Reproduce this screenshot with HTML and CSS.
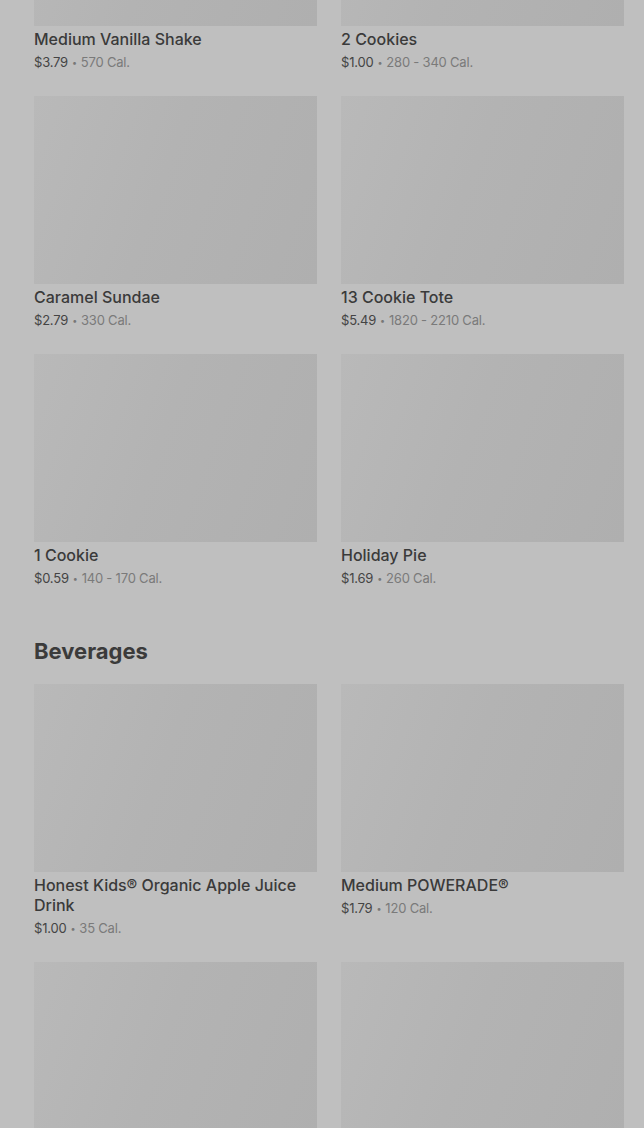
FILE: index.html
```html
<!DOCTYPE html>
<html lang="en">
<head>
    <meta charset="UTF-8">
    <meta name="viewport" content="width=device-width, initial-scale=1.0">
    <title>Menu</title>
    <link rel="stylesheet" href="styles.css">
</head>
<body>
    <div class="menu">
        <section class="section first">
            <div class="grid">
                <div class="card">
                    <div class="thumb"></div>
                    <div class="name">Medium Vanilla Shake</div>
                    <div class="meta"><span class="price">$3.79</span><span class="dot">•</span><span class="cal">570 Cal.</span></div>
                </div>
                <div class="card">
                    <div class="thumb"></div>
                    <div class="name">2 Cookies</div>
                    <div class="meta"><span class="price">$1.00</span><span class="dot">•</span><span class="cal">280 - 340 Cal.</span></div>
                </div>
                <div class="card">
                    <div class="thumb"></div>
                    <div class="name">Caramel Sundae</div>
                    <div class="meta"><span class="price">$2.79</span><span class="dot">•</span><span class="cal">330 Cal.</span></div>
                </div>
                <div class="card">
                    <div class="thumb"></div>
                    <div class="name">13 Cookie Tote</div>
                    <div class="meta"><span class="price">$5.49</span><span class="dot">•</span><span class="cal">1820 - 2210 Cal.</span></div>
                </div>
                <div class="card">
                    <div class="thumb"></div>
                    <div class="name">1 Cookie</div>
                    <div class="meta"><span class="price">$0.59</span><span class="dot">•</span><span class="cal">140 - 170 Cal.</span></div>
                </div>
                <div class="card">
                    <div class="thumb"></div>
                    <div class="name">Holiday Pie</div>
                    <div class="meta"><span class="price">$1.69</span><span class="dot">•</span><span class="cal">260 Cal.</span></div>
                </div>
            </div>
        </section>

        <section class="section">
            <h2>Beverages</h2>
            <div class="grid">
                <div class="card">
                    <div class="thumb"></div>
                    <div class="name">Honest Kids® Organic Apple Juice Drink</div>
                    <div class="meta"><span class="price">$1.00</span><span class="dot">•</span><span class="cal">35 Cal.</span></div>
                </div>
                <div class="card">
                    <div class="thumb"></div>
                    <div class="name">Medium POWERADE®</div>
                    <div class="meta"><span class="price">$1.79</span><span class="dot">•</span><span class="cal">120 Cal.</span></div>
                </div>
                <div class="card">
                    <div class="thumb"></div>
                </div>
                <div class="card">
                    <div class="thumb"></div>
                </div>
            </div>
        </section>
    </div>
</body>
</html>
```

FILE: styles.css
```css
* {
    margin: 0;
    padding: 0;
    box-sizing: border-box;
}

body {
    background: #bfbfbf;
    font-family: Inter, 'Liberation Sans', sans-serif;
    color: #3a3a3a;
    overflow: hidden;
    height: 1128px;
}

.menu {
    padding: 0 20px 0 34px;
    margin-top: -162px;
}

.section h2 {
    font-size: 22px;
    line-height: 28px;
    font-weight: 700;
    color: #3b3b3b;
    margin: 49px 0 19px;
}

.grid {
    display: grid;
    grid-template-columns: 1fr 1fr;
    column-gap: 24px;
    row-gap: 24px;
}

.thumb {
    height: 188px;
    background: linear-gradient(110deg, #b9b9b9 0%, #b3b3b3 45%, #afafaf 100%);
}

.name {
    margin-top: 3px;
    font-size: 16px;
    line-height: 20px;
    font-weight: 500;
    color: #3a3a3a;
}

.meta {
    margin-top: 3px;
    font-size: 13px;
    line-height: 20px;
    height: 20px;
    letter-spacing: -0.2px;
    color: #777;
}

.price {
    color: #444;
}

.dot {
    font-size: 9px;
    line-height: 0;
    margin: 0 4px;
    vertical-align: middle;
    color: #777;
}

.cal {
    color: #7a7a7a;
}
```
